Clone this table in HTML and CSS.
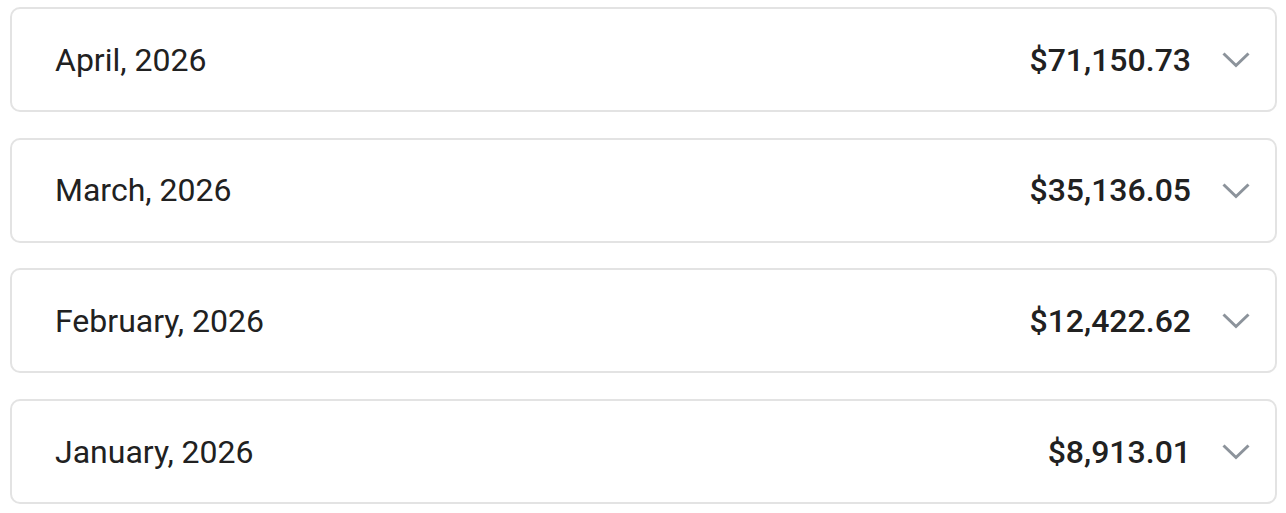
FILE: index.html
```html
<!DOCTYPE html>
<html lang="en">
<head>
    <meta charset="UTF-8">
    <title>Monthly totals</title>
    <link rel="stylesheet" href="styles.css">
</head>
<body>
    <div class="months">
        <div class="month">
            <span class="month-name">April, 2026</span>
            <span class="month-total">$71,150.73</span>
            <svg class="chevron" viewBox="0 0 30 17"><path d="M2.5 2.5 L15 14.5 L27.5 2.5"/></svg>
        </div>
        <div class="month">
            <span class="month-name">March, 2026</span>
            <span class="month-total">$35,136.05</span>
            <svg class="chevron" viewBox="0 0 30 17"><path d="M2.5 2.5 L15 14.5 L27.5 2.5"/></svg>
        </div>
        <div class="month">
            <span class="month-name">February, 2026</span>
            <span class="month-total">$12,422.62</span>
            <svg class="chevron" viewBox="0 0 30 17"><path d="M2.5 2.5 L15 14.5 L27.5 2.5"/></svg>
        </div>
        <div class="month">
            <span class="month-name">January, 2026</span>
            <span class="month-total">$8,913.01</span>
            <svg class="chevron" viewBox="0 0 30 17"><path d="M2.5 2.5 L15 14.5 L27.5 2.5"/></svg>
        </div>
    </div>
</body>
</html>
```

FILE: styles.css
```css
* {
    box-sizing: border-box;
    margin: 0;
    padding: 0;
}
body {
    font-family: Roboto, 'Noto Sans', sans-serif;
    background-color: #ffffff;
    color: #212121;
}
.months {
    display: flex;
    flex-direction: column;
    gap: 25.7px;
    padding: 7px 9px 0 10px;
}
.month {
    display: flex;
    align-items: center;
    height: 105px;
    padding: 0 24px 0 43px;
    border: 2px solid #e3e3e3;
    border-radius: 10px;
}
.month-name {
    flex-grow: 1;
    font-size: 32px;
}
.month-total {
    font-size: 32px;
    font-weight: 500;
}
.chevron {
    width: 30px;
    height: 17px;
    margin-left: 30px;
    fill: none;
    stroke: #8c939b;
    stroke-width: 3;
}
```
